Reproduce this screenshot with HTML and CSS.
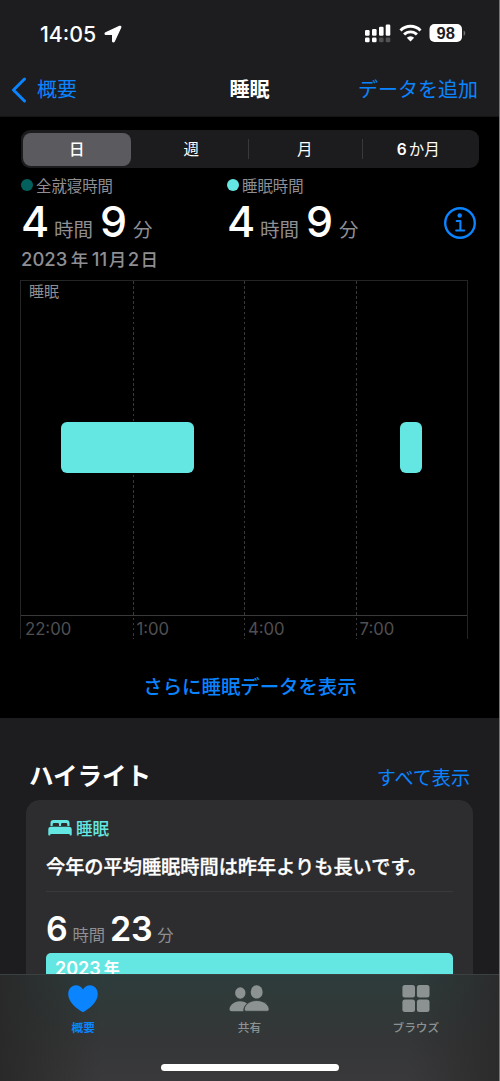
FILE: index.html
```html
<!DOCTYPE html>
<html lang="ja">
<head>
<meta charset="utf-8">
<title>睡眠</title>
<link rel="stylesheet" href="styles.css">
</head>
<body>
<div class="screen">
  <header class="header">
    <div class="status">
      <span class="clock">14:05</span>
      <svg class="loc" width="18" height="18" viewBox="0 0 18 18"><path d="M15.600 1.400 1.700 7.800c-1 .5-.8 1.600.3 1.600h6.600v6.500c0 1.200 1.200 1.400 1.700.3L16.700 2.500c.4-.9-.2-1.500-1.100-1.100z" fill="#fff" stroke="#fff" stroke-width="1.200" stroke-linejoin="round"/></svg>
      <svg class="sys" width="102" height="20" viewBox="0 0 102 20">
        <g fill="#fff"><rect x="1" y="6" width="4.600" height="5.800" rx="1.200"/><rect x="8" y="5" width="4.600" height="6.800" rx="1.200"/><rect x="15" y="2.800" width="4.600" height="9" rx="1.200"/><rect x="21.700" y=".5" width="4.600" height="11.300" rx="1.200"/><rect x="1" y="13.600" width="4.600" height="4.600" rx="1.300"/><rect x="8" y="13.600" width="4.600" height="4.600" rx="1.300"/></g>
        <g fill="#525254"><rect x="15" y="13.600" width="4.600" height="4.600" rx="1.300"/><rect x="21.700" y="13.600" width="4.600" height="4.600" rx="1.300"/></g>
        <g fill="none" stroke="#fff" stroke-width="2.900"><path d="M36.500 6.400a14 14 0 0 1 20 0"/><path d="M40.100 10.500a9 9 0 0 1 12.800 0"/></g>
        <path d="M42.800 13.700a5.300 5.300 0 0 1 7.400 0L46.500 17.500z" fill="#fff"/>
        <rect x="65.500" y="0" width="32.500" height="18" rx="5" fill="#fff"/><path d="M99.600 6.400c2.200.8 2.200 4.600 0 5.400z" fill="#727274"/>
        <text class="battery" x="81.700" y="15" text-anchor="middle">98</text>
      </svg>
    </div>
    <nav class="nav">
      <a class="back"><svg width="16" height="26" viewBox="0 0 16 26"><path d="M13.500 2 2.500 13l11 11" fill="none" stroke="#0a84ff" stroke-width="3" stroke-linecap="round" stroke-linejoin="round"/></svg><span>概要</span></a>
      <h1>睡眠</h1>
      <a class="add">データを追加</a>
    </nav>
  </header>

  <main>
    <div class="segments"><span class="seg on">日</span><span class="seg">週</span><span class="seg line">月</span><span class="seg line"><b>6</b>か月</span></div>
    <section class="summary">
      <div class="stat">
        <div class="legend"><i class="dot dark"></i>全就寝時間</div>
        <div class="value"><b>4</b><span>時間</span><b>9</b><span>分</span></div>
      </div>
      <div class="stat">
        <div class="legend"><i class="dot"></i>睡眠時間</div>
        <div class="value"><b>4</b><span>時間</span><b>9</b><span>分</span></div>
      </div>
      <svg class="info" width="34" height="34" viewBox="0 0 34 34"><circle cx="17" cy="17" r="14.800" fill="none" stroke="#0a84ff" stroke-width="2.400"/><circle cx="16.700" cy="9.500" r="2.200" fill="#0a84ff"/><path d="M13.700 15h3.700v9.300M13.200 24.500h8" fill="none" stroke="#0a84ff" stroke-width="2.100" stroke-linecap="round" stroke-linejoin="round"/></svg>
    </section>
    <div class="date"><span>2023</span><em>年</em><span>11</span><em>月</em><span>2</span><em>日</em></div>
    <section class="chart">
      <div class="col"><span class="series">睡眠</span><span class="tick">22:00</span></div>
      <div class="col"><span class="tick">1:00</span></div>
      <div class="col"><span class="tick">4:00</span></div>
      <div class="col"><span class="tick">7:00</span></div>
      <i class="bar" style="left:9%;width:29.7%"></i>
      <i class="bar" style="left:85%;width:4.900%"></i>
    </section>
    <a class="more">さらに睡眠データを表示</a>
  </main>

  <section class="highlights">
    <div class="heading"><h2>ハイライト</h2><a>すべて表示</a></div>
    <article class="card">
      <div class="topic"><svg width="24" height="18" viewBox="0 0 24 18" fill="#64e7e2"><path d="M2.500 7V4Q2.500 1 5.500 1h13Q21.500 1 21.500 4v3H19.300V5.200Q19.300 4 18 4h-3.800Q13 4 13 5.200V7h-2V5.200Q11 4 9.800 4H6Q4.700 4 4.700 5.200V7z"/><path d="M3 7.800h18Q23.700 7.800 23.700 10.400v5.400q0 .8-.8.8h-.5q-.8 0-.8-.8V15H2.400v.8q0 .8-.8.8h-.5q-.8 0-.8-.8V10.400Q.3 7.800 3 7.800z"/></svg><span>睡眠</span></div>
      <p>今年の平均睡眠時間は昨年よりも長いです。</p>
      <div class="average"><b>6</b><span>時間</span><b>23</b><span>分</span></div>
      <div class="year"><span>2023</span><em>年</em></div>
    </article>
  </section>

  <footer class="tabs">
    <div class="tab active"><svg width="32" height="30" viewBox="0 0 32 30"><path d="M16 28.300C10.500 25.300 1.200 18.800 1.200 10.100 1.200 5 4.600 1.300 8.900 1.300c3.200 0 5.700 1.700 7.100 4.300 1.400-2.600 3.900-4.300 7.100-4.300 4.300 0 7.700 3.700 7.700 8.800C30.800 18.800 21.500 25.300 16 28.300z" fill="#0a84ff"/></svg><span>概要</span></div>
    <div class="tab"><svg width="42" height="30" viewBox="0 0 42 30" fill="#8c9192"><ellipse cx="12.300" cy="9" rx="5.200" ry="5.700"/><path d="M3.700 27.300Q1.500 27.300 1.500 25.500C1.500 22 5.500 17.300 12 17.300c2.800 0 5 .7 7 2.200-2.600 2.200-4 5-3.600 7.800z"/><ellipse cx="28.700" cy="7.900" rx="6" ry="6.700"/><path d="M28.700 16.500c8 0 12.400 5.300 12.400 8.700 0 1.500-.9 2.100-2.400 2.100h-20c-1.500 0-2.400-.6-2.400-2.100 0-3.400 4.400-8.700 12.400-8.700z" stroke="#303837" stroke-width=".8"/></svg><span>共有</span></div>
    <div class="tab"><svg width="28" height="30" viewBox="0 0 28 30" fill="#8c9192"><rect x=".4" y="1" width="12.600" height="12.600" rx="2.500"/><rect x="14.900" y="1" width="12.600" height="12.600" rx="2.500"/><rect x=".4" y="15.500" width="12.600" height="12.600" rx="2.500"/><rect x="14.900" y="15.500" width="12.600" height="12.600" rx="2.500"/></svg><span>ブラウズ</span></div>
    <i class="home"></i>
  </footer>
</div>
</body>
</html>
```
FILE: styles.css
```css
* { box-sizing: border-box; }
body { margin: 0; background: #77777a; font-family: Inter, "Noto Sans CJK JP", sans-serif; color: #fff; }
h1, h2, p { margin: 0; }
i, em { font-style: normal; }
svg { display: block; flex: none; }
.screen { width: 499px; height: 1081px; overflow: hidden; background: #000; display: flex; flex-direction: column; white-space: nowrap; }

.header { flex: none; height: 117px; background: #1d1d1f; border-bottom: 1px solid #141415; }
.status { display: flex; align-items: center; height: 67px; padding: 0 31px 0 40px; }
.clock { font-size: 21.300px; font-weight: 500; line-height: 24px; width: 58px; }
.loc { margin-left: 6px; }
.sys { margin-left: auto; margin-right: 2px; }
.battery { font: 700 16.500px "Liberation Sans", sans-serif; fill: #1d1d1f; }
.nav { display: grid; grid-template-columns: 1fr auto 1fr; align-items: center; height: 45px; padding: 0 21px 0 11px; font-size: 20px; line-height: 24px; color: #0a84ff; }
.back { display: flex; align-items: center; gap: 10px; }
.nav span, .nav h1, .add { padding-top: 1px; }
.nav h1 { font-size: 20px; font-weight: 700; color: #fff; margin-left: 10px; }
.add { text-align: right; }

main { flex: none; height: 601px; padding: 13px 20px 0 21px; display: flex; flex-direction: column; }
.segments { display: grid; grid-template-columns: repeat(4, 1fr); height: 38px; padding: 3px 2px; border-radius: 9px; background: #1c1c1e; font-size: 15.500px; line-height: 33px; text-align: center; }
.seg { margin-left: -2px; margin-right: 2px; }
.seg.on { background: #5b5a5f; border-radius: 8px; margin-left: 0; margin-right: 6px; font-weight: 500; }
.seg.line { background: linear-gradient(#39393c, #39393c) 0 6px / 1px 20px no-repeat; }
.seg b { font-weight: 600; margin-right: 2px; }
.summary { display: flex; height: 78px; padding-top: 8px; }
.stat { width: 206px; }
.legend { display: flex; align-items: center; gap: 3px; height: 18px; font-size: 15.400px; color: #8e8e93; }
.dot { width: 12px; height: 12px; border-radius: 50%; background: #64e7e2; }
.dot.dark { background: #04605d; }
.value { display: flex; align-items: baseline; line-height: 50px; margin-top: 2px; }
.value b { font-size: 43px; font-weight: 500; width: 26.500px; letter-spacing: -1px; }
.value span { font-size: 19.500px; color: #8e8e93; margin: 0 7px 0 6.500px; }
.info { margin-left: auto; margin-top: 30px; margin-right: 2px; }
.date { display: flex; align-items: baseline; height: 27px; line-height: 27px; color: #8e8e93; font-size: 18.500px; font-weight: 500; }
.date em { font-size: 17.500px; margin: 0 3.500px; }
.date em ~ em { margin: 0 1.500px; }

.chart { position: relative; flex: none; display: grid; grid-template-columns: repeat(4, 1fr); width: 448px; height: 359px; margin: 7px 0 0 -1px; border: solid #242426; border-width: 1px 1px 0; background: linear-gradient(#3a3a3c, #3a3a3c) 0 334px / 100% 1px no-repeat; }
.col { display: flex; flex-direction: column; padding: 0 0 0 4px; background: repeating-linear-gradient(#38383a 0 2.600px, transparent 2.600px 5.100px) 0 0 / 1px 100% no-repeat; }
.col:first-child { background: none; }
.series { font-size: 15px; line-height: 22px; padding-left: 4px; color: #8e8e93; }
.tick { margin-top: auto; font-size: 16.700px; line-height: 20px; color: #505053; }
.bar { position: absolute; top: 140.500px; height: 51px; border-radius: 6px; background: #64e7e2; }
.more { margin-top: 34px; text-align: center; font-size: 19.400px; line-height: 28px; font-weight: 500; color: #0a84ff; }

.highlights { flex: none; height: 256px; background: #1d1d1f; padding: 42px 26px 0; overflow: hidden; }
.heading { display: flex; align-items: center; justify-content: space-between; height: 32px; padding: 0 3px 0 3px; }
.heading h2 { font-size: 24.500px; line-height: 32px; font-weight: 700; }
.heading a { font-size: 19.100px; line-height: 28px; color: #0a84ff; padding-top: 4px; }
.card { margin-top: 8px; height: 300px; border-radius: 14px; background: #2d2d2f; padding: 18px 20px; }
.topic { display: flex; align-items: center; gap: 4px; height: 20px; padding-left: 2px; color: #64e7e2; font-size: 16.500px; font-weight: 500; }
.card p { height: 54px; padding-top: 15px; font-size: 19.200px; line-height: 28px; font-weight: 500; -webkit-text-stroke: .3px #fff; border-bottom: 1px solid #3a3a3c; }
.average { display: flex; align-items: baseline; line-height: 44px; height: 61px; padding-top: 15px; }
.average b { font-size: 34px; font-weight: 600; letter-spacing: -.3px; }
.average span { font-size: 16.300px; color: #8e8e93; margin: 0 5px; }
.year { height: 100px; border-radius: 5px; background: #64e7e2; padding-left: 9px; font-size: 18px; line-height: 31px; font-weight: 600; display: flex; }
.year em { font-size: 16px; margin-left: 3px; }

.tabs { flex: none; height: 107px; position: relative; display: grid; grid-template-columns: repeat(3, 1fr); padding-top: 9px; border-top: 1px solid #3b4041; background: linear-gradient(90deg, #292929 0, rgba(41,41,41,0) 20%, rgba(41,41,41,0) 82%, #2b2b2c 100%), linear-gradient(#2d3c3b, #303938 30%, #353637 62%, #39393b); }
.tab { display: flex; flex-direction: column; align-items: center; font-size: 11.700px; line-height: 16px; font-weight: 500; color: #8c9192; }
.tab span { margin-top: 6px; }
.active { color: #0a84ff; }
.active span { font-weight: 700; }
.home { position: absolute; left: 161px; bottom: 10px; width: 178px; height: 7px; border-radius: 4px; background: #fff; }
```
